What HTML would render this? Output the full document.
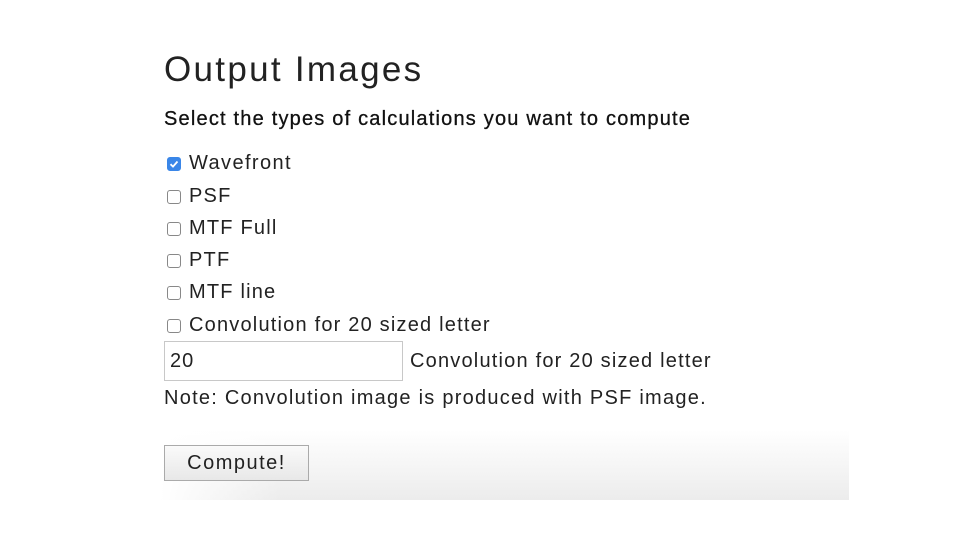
<!DOCTYPE html>
<html><head><style>
body{margin:0;width:960px;height:540px;background:#fff;position:relative;overflow:hidden;font-family:"Liberation Sans",sans-serif;color:#222}
.a{position:absolute;white-space:nowrap}
.shade{position:absolute;left:160px;top:430px;width:689px;height:70px;background:linear-gradient(to bottom,rgba(255,255,255,0),rgba(236,236,236,1));}
.shade2{position:absolute;left:160px;top:430px;width:120px;height:70px;background:linear-gradient(to right,#fff,rgba(255,255,255,0))}
.cb{position:absolute;left:167px;width:12px;height:12px;border:1px solid #888;border-radius:3px;background:#fff}
.row{position:absolute;left:189px;font-size:20px;line-height:24px;letter-spacing:1.2px}
</style></head><body>
<div class="shade"></div><div class="shade2"></div>
<div class="a" style="left:164px;top:50px;font-size:35px;color:#222;letter-spacing:2.3px">Output Images</div>
<div class="a" style="left:164px;top:108px;font-size:20px;color:#111;letter-spacing:1.2px;-webkit-text-stroke:0.3px #111">Select the types of calculations you want to compute</div>
<div class="cb" style="top:157px;background:#3a86e8;border-color:#3a86e8"><svg width="12" height="12" style="position:absolute;left:0;top:0"><path d="M2.5 6.2 L5 8.6 L9.5 3.5" stroke="#fff" stroke-width="1.8" fill="none"/></svg></div>
<div class="row" style="top:151px;letter-spacing:1.4px">Wavefront</div>
<div class="cb" style="top:190px"></div><div class="row" style="top:184px">PSF</div>
<div class="cb" style="top:222px"></div><div class="row" style="top:216px">MTF Full</div>
<div class="cb" style="top:254px"></div><div class="row" style="top:248px">PTF</div>
<div class="cb" style="top:286px"></div><div class="row" style="top:280px">MTF line</div>
<div class="cb" style="top:319px"></div><div class="row" style="top:313px">Convolution for 20 sized letter</div>
<div class="a" style="left:164px;top:341px;width:237px;height:38px;border:1px solid #c8c8c8;background:#fff"></div>
<div class="a" style="left:170px;top:350px;font-size:20px;letter-spacing:1px">20</div>
<div class="a" style="left:410px;top:350px;font-size:20px;letter-spacing:1.2px">Convolution for 20 sized letter</div>
<div class="a" style="left:164px;top:387px;font-size:20px;letter-spacing:1.25px">Note: Convolution image is produced with PSF image.</div>
<div class="a" style="left:164px;top:445px;width:143px;height:34px;border:1px solid #aaa;background:linear-gradient(#fafafa,#e8e8e8);font-size:20px;text-align:center;line-height:34px;letter-spacing:1.5px">Compute!</div>
</body></html>
